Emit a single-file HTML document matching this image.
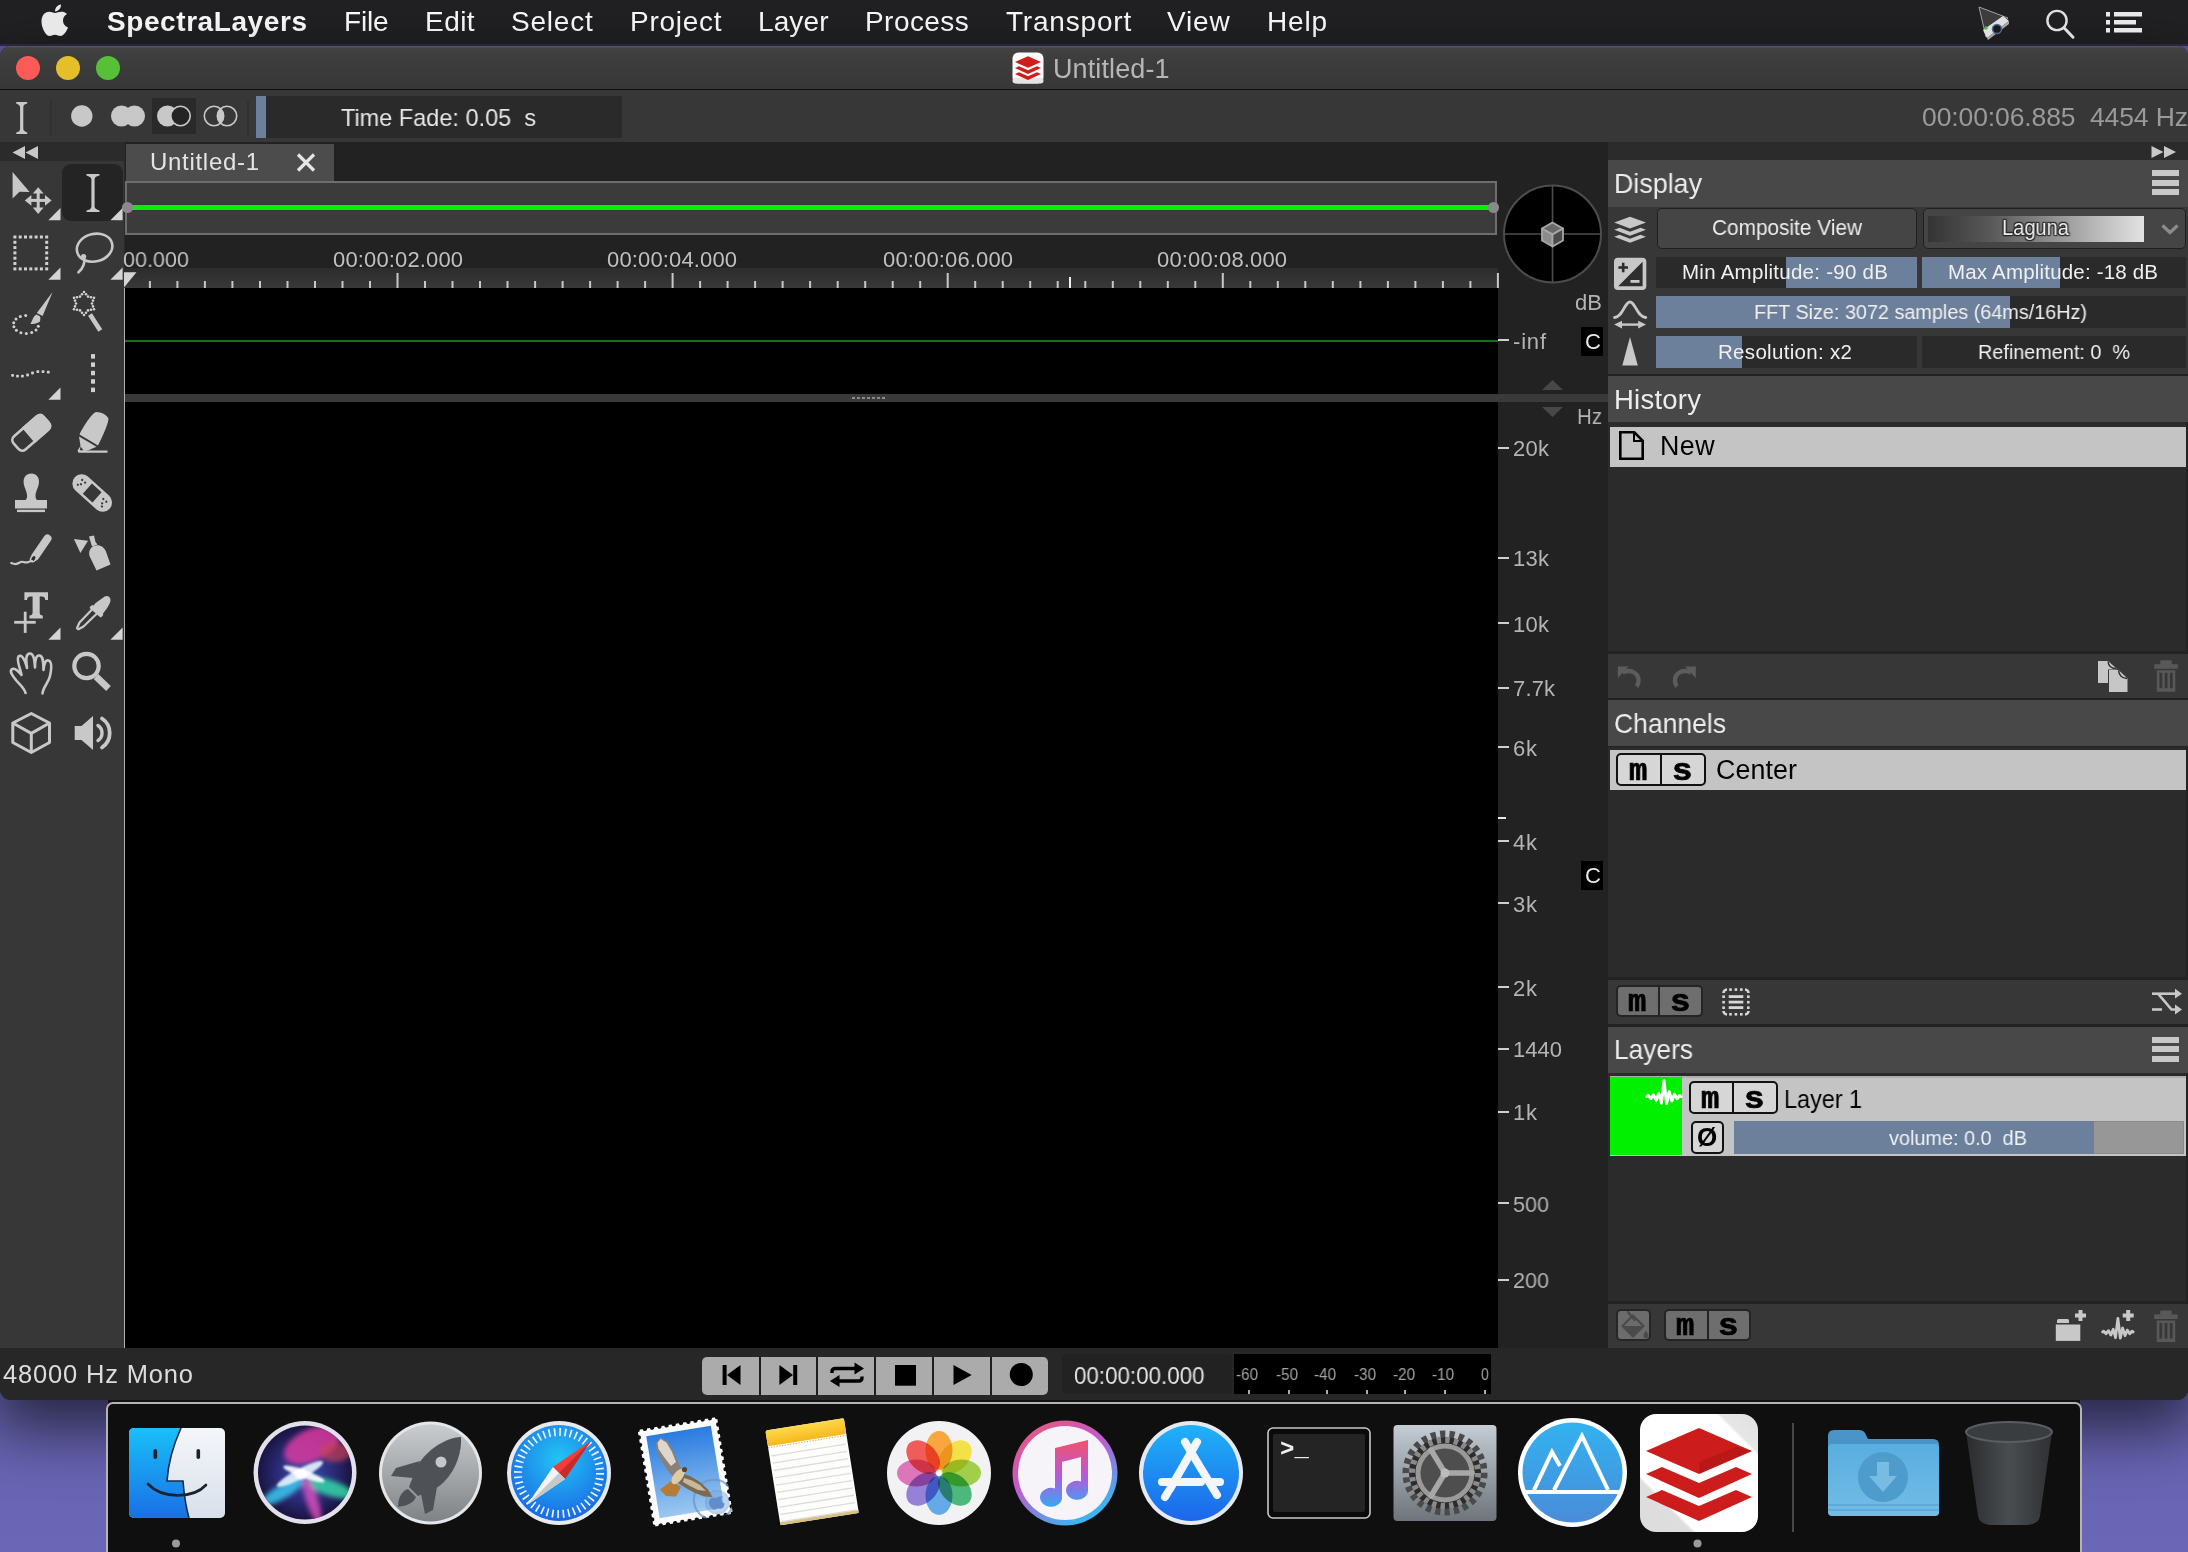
<!DOCTYPE html>
<html><head><meta charset="utf-8"><title>SpectraLayers</title>
<style>
html,body{margin:0;padding:0;}
body{width:2188px;height:1552px;overflow:hidden;position:relative;background:#5f5aa6;font-family:"Liberation Sans",sans-serif;}
.b{position:absolute;box-sizing:border-box;}
.t{position:absolute;white-space:pre;will-change:transform;}
svg{position:absolute;overflow:visible;}
</style></head><body>
<div class="b " style="left:0px;top:0px;width:2188px;height:1552px;background:linear-gradient(180deg,#5c58a2 0px,#6662ae 1400px,#6b66b6 1552px);"></div>
<div class="b " style="left:0px;top:0px;width:2188px;height:43.5px;background:#212123;"></div>
<div class="b " style="left:0px;top:43.5px;width:2188px;height:2.5px;background:#2e2b50;"></div>
<span class="t " style="left:107.0px;top:8.0px;font-size:28px;line-height:28px;color:#fff;letter-spacing:0.58px;font-weight:bold;">SpectraLayers</span>
<span class="t " style="left:344.0px;top:8.0px;font-size:28px;line-height:28px;color:#fff;letter-spacing:-0.17px;">File</span>
<span class="t " style="left:425.0px;top:8.0px;font-size:28px;line-height:28px;color:#fff;letter-spacing:0.45px;">Edit</span>
<span class="t " style="left:511.0px;top:8.0px;font-size:28px;line-height:28px;color:#fff;letter-spacing:0.80px;">Select</span>
<span class="t " style="left:629.5px;top:8.0px;font-size:28px;line-height:28px;color:#fff;letter-spacing:0.73px;">Project</span>
<span class="t " style="left:758.0px;top:8.0px;font-size:28px;line-height:28px;color:#fff;letter-spacing:0.11px;">Layer</span>
<span class="t " style="left:865.0px;top:8.0px;font-size:28px;line-height:28px;color:#fff;letter-spacing:0.44px;">Process</span>
<span class="t " style="left:1005.5px;top:8.0px;font-size:28px;line-height:28px;color:#fff;letter-spacing:0.80px;">Transport</span>
<span class="t " style="left:1167.4px;top:8.0px;font-size:28px;line-height:28px;color:#fff;letter-spacing:0.81px;">View</span>
<span class="t " style="left:1267.0px;top:8.0px;font-size:28px;line-height:28px;color:#fff;letter-spacing:0.81px;">Help</span>
<div class="b" id="win" style="left:0;top:46px;width:2188px;height:1354px;background:#272727;border-radius:10px 10px 11px 11px;overflow:hidden;box-shadow:0 24px 60px 6px rgba(0,0,0,0.6);">
<div class="b" style="left:0;top:-46px;width:2188px;height:1552px;">
<div class="b " style="left:0px;top:46px;width:2188px;height:43px;background:linear-gradient(180deg,#5a5a5a 0,#434343 2px,#3e3e3e 10px,#373737 43px);"></div>
<div class="b " style="left:0px;top:89px;width:2188px;height:1px;background:#0c0c0c;"></div>
<div class="b " style="left:16px;top:56px;width:24px;height:24px;background:#fc5b57;border-radius:50%;"></div>
<div class="b " style="left:56px;top:56px;width:24px;height:24px;background:#e5bf2a;border-radius:50%;"></div>
<div class="b " style="left:96px;top:56px;width:24px;height:24px;background:#57c038;border-radius:50%;"></div>
<span class="t " style="left:1053.0px;top:55.7px;font-size:27px;line-height:27px;color:#b6b6b6;letter-spacing:0.11px;">Untitled-1</span>
<div class="b " style="left:0px;top:90px;width:2188px;height:52px;background:#373737;"></div>
<div class="b " style="left:256px;top:96px;width:366px;height:42px;background:#2a2a2a;"></div>
<div class="b " style="left:256px;top:96px;width:10px;height:42px;background:#6d809b;"></div>
<div class="b " style="left:152px;top:98px;width:44px;height:36px;background:#2a2a2a;"></div>
<div class="b " style="left:50px;top:100px;width:2px;height:36px;background:#313131;"></div>
<div class="b " style="left:247px;top:100px;width:2px;height:36px;background:#313131;"></div>
<span class="t " style="left:341.0px;top:105.5px;font-size:24px;line-height:24px;color:#e6e6e6;transform:scaleX(0.9789);transform-origin:0 50%;">Time Fade: 0.05  s</span>
<span class="t " style="left:1922.0px;top:104.3px;font-size:26.5px;line-height:26.5px;color:#9a9a9a;letter-spacing:-0.11px;">00:00:06.885  4454 Hz</span>
<div class="b " style="left:0px;top:142px;width:2188px;height:20px;background:#2b2b2b;"></div>
<div class="b " style="left:0px;top:161px;width:124px;height:1187px;background:#373737;"></div>
<div class="b " style="left:62px;top:164px;width:61px;height:57px;background:#242424;border-radius:9px;"></div>
<div class="b " style="left:124px;top:142px;width:1484px;height:1206px;background:#222222;"></div>
<div class="b " style="left:124px;top:142px;width:1px;height:1206px;background:#2a2a2a;"></div>
<div class="b " style="left:126px;top:144px;width:208px;height:37px;background:#4c4c4c;"></div>
<span class="t " style="left:150.0px;top:150.0px;font-size:24px;line-height:24px;color:#e4e4e4;letter-spacing:0.70px;">Untitled-1</span>
<div class="b " style="left:125px;top:181px;width:1372px;height:54px;background:#3b3b3b;border:2px solid #6e6e6e;"></div>
<div class="b " style="left:131px;top:205px;width:1361px;height:5px;background:#0bea0b;"></div>
<div class="b " style="left:122px;top:202px;width:11px;height:11px;background:#8a8a8a;border-radius:50%;"></div>
<div class="b " style="left:1488px;top:202px;width:11px;height:11px;background:#8a8a8a;border-radius:50%;"></div>
<div class="b " style="left:125px;top:268px;width:1373px;height:20px;background:linear-gradient(180deg,#2c2c2c,#383838);"></div>
<span class="t " style="left:332.5px;top:249.4px;font-size:22px;line-height:22px;color:#c0c0c0;letter-spacing:0.14px;">00:00:02.000</span>
<span class="t " style="left:606.5px;top:249.4px;font-size:22px;line-height:22px;color:#c0c0c0;letter-spacing:0.14px;">00:00:04.000</span>
<span class="t " style="left:882.5px;top:249.4px;font-size:22px;line-height:22px;color:#c0c0c0;letter-spacing:0.14px;">00:00:06.000</span>
<span class="t " style="left:1156.5px;top:249.4px;font-size:22px;line-height:22px;color:#c0c0c0;letter-spacing:0.14px;">00:00:08.000</span>
<span class="t " style="left:122.5px;top:249.4px;font-size:22px;line-height:22px;color:#c0c0c0;transform:scaleX(0.9808);transform-origin:0 50%;">00.000</span>
<svg style="left:0;top:0" width="2188" height="300" fill="#c8c8c8"><rect x="148.9" y="281" width="2" height="7"/><rect x="176.4" y="281" width="2" height="7"/><rect x="203.9" y="281" width="2" height="7"/><rect x="231.4" y="281" width="2" height="7"/><rect x="259.0" y="281" width="2" height="7"/><rect x="286.5" y="281" width="2" height="7"/><rect x="314.0" y="281" width="2" height="7"/><rect x="341.5" y="281" width="2" height="7"/><rect x="369.0" y="281" width="2" height="7"/><rect x="396.5" y="273" width="2" height="15"/><rect x="424.0" y="281" width="2" height="7"/><rect x="451.5" y="281" width="2" height="7"/><rect x="479.0" y="281" width="2" height="7"/><rect x="506.5" y="281" width="2" height="7"/><rect x="534.1" y="281" width="2" height="7"/><rect x="561.6" y="281" width="2" height="7"/><rect x="589.1" y="281" width="2" height="7"/><rect x="616.6" y="281" width="2" height="7"/><rect x="644.1" y="281" width="2" height="7"/><rect x="671.6" y="273" width="2" height="15"/><rect x="699.1" y="281" width="2" height="7"/><rect x="726.6" y="281" width="2" height="7"/><rect x="754.1" y="281" width="2" height="7"/><rect x="781.6" y="281" width="2" height="7"/><rect x="809.1" y="281" width="2" height="7"/><rect x="836.7" y="281" width="2" height="7"/><rect x="864.2" y="281" width="2" height="7"/><rect x="891.7" y="281" width="2" height="7"/><rect x="919.2" y="281" width="2" height="7"/><rect x="946.7" y="273" width="2" height="15"/><rect x="974.2" y="281" width="2" height="7"/><rect x="1001.7" y="281" width="2" height="7"/><rect x="1029.2" y="281" width="2" height="7"/><rect x="1056.7" y="281" width="2" height="7"/><rect x="1084.3" y="281" width="2" height="7"/><rect x="1111.8" y="281" width="2" height="7"/><rect x="1139.3" y="281" width="2" height="7"/><rect x="1166.8" y="281" width="2" height="7"/><rect x="1194.3" y="281" width="2" height="7"/><rect x="1221.8" y="273" width="2" height="15"/><rect x="1249.3" y="281" width="2" height="7"/><rect x="1276.8" y="281" width="2" height="7"/><rect x="1304.3" y="281" width="2" height="7"/><rect x="1331.8" y="281" width="2" height="7"/><rect x="1359.4" y="281" width="2" height="7"/><rect x="1386.9" y="281" width="2" height="7"/><rect x="1414.4" y="281" width="2" height="7"/><rect x="1441.9" y="281" width="2" height="7"/><rect x="1469.4" y="281" width="2" height="7"/><rect x="1496.9" y="273" width="2" height="15"/><rect x="1069" y="277" width="2" height="11" fill="#f0f0f0"/><polygon points="124,272.300 136.500,272.300 124,287.600" fill="#d4d4d4"/></svg>
<div class="b " style="left:125px;top:288px;width:1373px;height:106px;background:#000;"></div>
<div class="b " style="left:125px;top:340px;width:1373px;height:2px;background:#14701a;"></div>
<div class="b " style="left:125px;top:394px;width:1483px;height:8px;background:#3a3a3a;"></div>
<div class="b " style="left:125px;top:402px;width:1373px;height:946px;background:#000;"></div>
<div class="b " style="left:124px;top:288px;width:1px;height:1060px;background:#b0b0b0;"></div>
<svg style="left:0;top:0" width="2188" height="410" fill="#8a8a8a"><rect x="852" y="397" width="3" height="2"/><rect x="857" y="397" width="3" height="2"/><rect x="862" y="397" width="3" height="2"/><rect x="867" y="397" width="3" height="2"/><rect x="872" y="397" width="3" height="2"/><rect x="877" y="397" width="3" height="2"/><rect x="882" y="397" width="3" height="2"/></svg>
<div class="b " style="left:1498px;top:402px;width:110px;height:946px;background:#222;"></div>
<div class="b " style="left:1498px;top:288px;width:110px;height:106px;background:#222;"></div>
<div class="b " style="left:1498px;top:339px;width:11px;height:2px;background:#cfcfcf;"></div>
<span class="t " style="left:1513.0px;top:330.7px;font-size:22px;line-height:22px;color:#b4b4b4;letter-spacing:0.81px;">-inf</span>
<div class="b " style="left:1498px;top:447px;width:11px;height:2px;background:#cfcfcf;"></div>
<span class="t " style="left:1512.5px;top:438.2px;font-size:22px;line-height:22px;color:#b4b4b4;letter-spacing:0.26px;">20k</span>
<div class="b " style="left:1498px;top:557px;width:11px;height:2px;background:#cfcfcf;"></div>
<span class="t " style="left:1512.5px;top:548.4px;font-size:22px;line-height:22px;color:#b4b4b4;letter-spacing:0.26px;">13k</span>
<div class="b " style="left:1498px;top:622px;width:11px;height:2px;background:#cfcfcf;"></div>
<span class="t " style="left:1512.5px;top:614.0px;font-size:22px;line-height:22px;color:#b4b4b4;letter-spacing:0.26px;">10k</span>
<div class="b " style="left:1498px;top:687px;width:11px;height:2px;background:#cfcfcf;"></div>
<span class="t " style="left:1512.5px;top:678.4px;font-size:22px;line-height:22px;color:#b4b4b4;letter-spacing:0.14px;">7.7k</span>
<div class="b " style="left:1498px;top:746px;width:11px;height:2px;background:#cfcfcf;"></div>
<span class="t " style="left:1512.5px;top:738.1px;font-size:22px;line-height:22px;color:#b4b4b4;letter-spacing:0.76px;">6k</span>
<div class="b " style="left:1498px;top:840px;width:11px;height:2px;background:#cfcfcf;"></div>
<span class="t " style="left:1512.5px;top:832.1px;font-size:22px;line-height:22px;color:#b4b4b4;letter-spacing:0.76px;">4k</span>
<div class="b " style="left:1498px;top:902px;width:11px;height:2px;background:#cfcfcf;"></div>
<span class="t " style="left:1512.5px;top:894.0px;font-size:22px;line-height:22px;color:#b4b4b4;letter-spacing:0.76px;">3k</span>
<div class="b " style="left:1498px;top:986px;width:11px;height:2px;background:#cfcfcf;"></div>
<span class="t " style="left:1512.5px;top:978.1px;font-size:22px;line-height:22px;color:#b4b4b4;letter-spacing:0.76px;">2k</span>
<div class="b " style="left:1498px;top:1048px;width:11px;height:2px;background:#cfcfcf;"></div>
<span class="t " style="left:1512.5px;top:1039.4px;font-size:22px;line-height:22px;color:#b4b4b4;letter-spacing:0.02px;">1440</span>
<div class="b " style="left:1498px;top:1111px;width:11px;height:2px;background:#cfcfcf;"></div>
<span class="t " style="left:1512.5px;top:1102.2px;font-size:22px;line-height:22px;color:#b4b4b4;letter-spacing:0.76px;">1k</span>
<div class="b " style="left:1498px;top:1202px;width:11px;height:2px;background:#cfcfcf;"></div>
<span class="t " style="left:1512.5px;top:1194.0px;font-size:22px;line-height:22px;color:#b4b4b4;transform:scaleX(0.9807);transform-origin:0 50%;">500</span>
<div class="b " style="left:1498px;top:1279px;width:11px;height:2px;background:#cfcfcf;"></div>
<span class="t " style="left:1512.5px;top:1270.4px;font-size:22px;line-height:22px;color:#b4b4b4;transform:scaleX(0.9807);transform-origin:0 50%;">200</span>
<div class="b " style="left:1498px;top:817px;width:8px;height:2px;background:#e8e8e8;"></div>
<span class="t " style="left:1575.0px;top:292.4px;font-size:22px;line-height:22px;color:#b4b4b4;letter-spacing:0.09px;">dB</span>
<span class="t " style="left:1577.0px;top:406.4px;font-size:22px;line-height:22px;color:#b4b4b4;transform:scaleX(0.9298);transform-origin:0 50%;">Hz</span>
<div class="b " style="left:1581px;top:327px;width:22px;height:29px;background:#000;"></div>
<span class="t " style="left:1585.0px;top:330.9px;font-size:22px;line-height:22px;color:#e8e8e8;">C</span>
<div class="b " style="left:1581px;top:861px;width:22px;height:29px;background:#000;"></div>
<span class="t " style="left:1585.0px;top:864.9px;font-size:22px;line-height:22px;color:#e8e8e8;">C</span>
<svg style="left:0;top:0" width="2188" height="430"><polygon points="1542,390 1552.5,380 1563,390" fill="#484848"/><polygon points="1542,407 1563,407 1552.5,417" fill="#484848"/></svg>
<svg style="left:1498px;top:180px" width="110" height="110" viewBox="1498 180 110 110">
<circle cx="1552.5" cy="234" r="48.5" fill="#000" stroke="#4d4d4d" stroke-width="2"/>
<path d="M1552.5 185V283M1503.5 234H1601.5" stroke="#4d4d4d" stroke-width="1.6"/>
<g stroke="#a8a8a8" stroke-width="1.8" stroke-linejoin="round">
<polygon points="1552.5,222.5 1563,228.5 1552.5,234.5 1542,228.5" fill="#6a6a6a"/>
<polygon points="1542,228.5 1552.5,234.5 1552.5,246.5 1542,240.5" fill="#8c8c8c"/>
<polygon points="1563,228.5 1552.5,234.5 1552.5,246.5 1563,240.5" fill="#4a4a4a"/>
</g></svg>
<div class="b " style="left:1608px;top:142px;width:580px;height:1206px;background:#222;"></div>
<div class="b " style="left:1608px;top:142px;width:580px;height:18px;background:#2b2b2b;"></div>
<div class="b " style="left:1608px;top:160px;width:580px;height:46.5px;background:#484848;"></div>
<span class="t " style="left:1614.0px;top:169.8px;font-size:27.5px;line-height:27.5px;color:#ececec;transform:scaleX(0.9760);transform-origin:0 50%;">Display</span>
<div class="b " style="left:2152px;top:170.0px;width:27px;height:6px;background:#c8c8c8;"></div>
<div class="b " style="left:2152px;top:179.6px;width:27px;height:6px;background:#c8c8c8;"></div>
<div class="b " style="left:2152px;top:189.2px;width:27px;height:6px;background:#c8c8c8;"></div>
<div class="b " style="left:1608px;top:206.5px;width:580px;height:167px;background:#373737;"></div>
<div class="b " style="left:1657px;top:207.5px;width:260px;height:41px;background:#454545;border:1.5px solid #1f1f1f;border-radius:5px;"></div>
<span class="t " style="left:1712.0px;top:217.8px;font-size:21.5px;line-height:21.5px;color:#ececec;transform:scaleX(0.9680);transform-origin:0 50%;">Composite View</span>
<div class="b " style="left:1923px;top:207.5px;width:263px;height:41px;background:#454545;border:1.5px solid #1f1f1f;border-radius:5px;"></div>
<div class="b " style="left:1928px;top:216px;width:216px;height:26px;background:linear-gradient(90deg,#343434 0%,#5a5a5a 30%,#8a8a8a 55%,#bdbdbd 80%,#e2e2e2 100%);"></div>
<span class="t " style="left:2002.0px;top:217.8px;font-size:21.5px;line-height:21.5px;color:#f0f0f0;text-shadow:0 0 2px #222,1px 1px 1px #222,-1px -1px 1px #222,1px -1px 1px #222,-1px 1px 1px #222;transform:scaleX(0.9338);transform-origin:0 50%;">Laguna</span>
<svg style="left:2160px;top:222px" width="20" height="14"><path d="M2.5 3.5L10 10.5L17.5 3.5" fill="none" stroke="#8c8c8c" stroke-width="3.2"/></svg>
<div class="b " style="left:1656px;top:256.5px;width:261px;height:31.5px;background:#2a2a2a;"></div>
<div class="b " style="left:1786px;top:256.5px;width:131px;height:31.5px;background:#6d809b;"></div>
<span class="t " style="left:1682.0px;top:262.2px;font-size:20.5px;line-height:20.5px;color:#f0f0f0;letter-spacing:0.27px;">Min Amplitude: -90 dB</span>
<div class="b " style="left:1922px;top:256.5px;width:264px;height:31.5px;background:#2a2a2a;"></div>
<div class="b " style="left:1922px;top:256.5px;width:138px;height:31.5px;background:#6d809b;"></div>
<span class="t " style="left:1948.0px;top:262.2px;font-size:20.5px;line-height:20.5px;color:#f0f0f0;letter-spacing:0.19px;">Max Amplitude: -18 dB</span>
<div class="b " style="left:1656px;top:296px;width:530px;height:32px;background:#2a2a2a;"></div>
<div class="b " style="left:1656px;top:296px;width:354px;height:32px;background:#6d809b;"></div>
<span class="t " style="left:1754.0px;top:301.9px;font-size:20.5px;line-height:20.5px;color:#f0f0f0;transform:scaleX(0.9657);transform-origin:0 50%;">FFT Size: 3072 samples (64ms/16Hz)</span>
<div class="b " style="left:1656px;top:336px;width:261px;height:32px;background:#2a2a2a;"></div>
<div class="b " style="left:1656px;top:336px;width:86px;height:32px;background:#6d809b;"></div>
<span class="t " style="left:1718.0px;top:341.9px;font-size:20.5px;line-height:20.5px;color:#f0f0f0;letter-spacing:0.31px;">Resolution: x2</span>
<div class="b " style="left:1922px;top:336px;width:264px;height:32px;background:#2a2a2a;"></div>
<span class="t " style="left:1978.0px;top:341.9px;font-size:20.5px;line-height:20.5px;color:#f0f0f0;transform:scaleX(0.9666);transform-origin:0 50%;">Refinement: 0  %</span>
<div class="b " style="left:1608px;top:373.5px;width:580px;height:3px;background:#222;"></div>
<div class="b " style="left:1608px;top:376px;width:580px;height:46px;background:#484848;"></div>
<span class="t " style="left:1614.0px;top:385.8px;font-size:27.5px;line-height:27.5px;color:#ececec;letter-spacing:0.24px;">History</span>
<div class="b " style="left:1608px;top:422px;width:580px;height:229px;background:#2b2b2b;"></div>
<div class="b " style="left:1610px;top:426.5px;width:576px;height:40px;background:#c4c4c4;"></div>
<span class="t " style="left:1660.0px;top:433.2px;font-size:26.8px;line-height:26.8px;color:#000;letter-spacing:0.44px;">New</span>
<div class="b " style="left:1608px;top:651px;width:580px;height:2.5px;background:#222;"></div>
<div class="b " style="left:1608px;top:653.5px;width:580px;height:44px;background:#373737;"></div>
<div class="b " style="left:1608px;top:697.5px;width:580px;height:2.5px;background:#222;"></div>
<div class="b " style="left:1608px;top:700px;width:580px;height:46px;background:#484848;"></div>
<span class="t " style="left:1614.0px;top:709.8px;font-size:27.5px;line-height:27.5px;color:#ececec;transform:scaleX(0.9640);transform-origin:0 50%;">Channels</span>
<div class="b " style="left:1608px;top:746.5px;width:580px;height:230.5px;background:#2b2b2b;"></div>
<div class="b " style="left:1610px;top:750px;width:576px;height:40px;background:#c4c4c4;"></div>
<span class="t " style="left:1716.0px;top:757.0px;font-size:26.8px;line-height:26.8px;color:#000;letter-spacing:0.11px;">Center</span>
<div class="b " style="left:1608px;top:977px;width:580px;height:3px;background:#222;"></div>
<div class="b " style="left:1608px;top:980px;width:580px;height:44px;background:#373737;"></div>
<div class="b " style="left:1608px;top:1024px;width:580px;height:2.5px;background:#222;"></div>
<div class="b " style="left:1608px;top:1026.5px;width:580px;height:46px;background:#484848;"></div>
<span class="t " style="left:1614.0px;top:1036.3px;font-size:27.5px;line-height:27.5px;color:#ececec;transform:scaleX(0.9571);transform-origin:0 50%;">Layers</span>
<div class="b " style="left:2152px;top:1036.5px;width:27px;height:6px;background:#c8c8c8;"></div>
<div class="b " style="left:2152px;top:1046.1px;width:27px;height:6px;background:#c8c8c8;"></div>
<div class="b " style="left:2152px;top:1055.7px;width:27px;height:6px;background:#c8c8c8;"></div>
<div class="b " style="left:1608px;top:1072.5px;width:580px;height:228px;background:#2b2b2b;"></div>
<div class="b " style="left:1610px;top:1076px;width:576px;height:80px;background:#c4c4c4;border-top:2px solid #b0b0b0;"></div>
<div class="b " style="left:1610px;top:1077px;width:72px;height:78px;background:#00f000;"></div>
<span class="t " style="left:1784.0px;top:1085.8px;font-size:26px;line-height:26px;color:#000;transform:scaleX(0.8995);transform-origin:0 50%;">Layer 1</span>
<div class="b " style="left:1734px;top:1120.5px;width:450px;height:33px;background:#979797;border:1px solid #8a8a8a;"></div>
<div class="b " style="left:1734px;top:1120.5px;width:360px;height:33px;background:#6d809b;"></div>
<span class="t " style="left:1889.0px;top:1128.1px;font-size:20.5px;line-height:20.5px;color:#eef2f8;transform:scaleX(0.9688);transform-origin:0 50%;">volume: 0.0  dB</span>
<div class="b " style="left:1608px;top:1300.5px;width:580px;height:3.5px;background:#222;"></div>
<div class="b " style="left:1608px;top:1304px;width:580px;height:44px;background:#373737;"></div>
<div class="b " style="left:2186px;top:422px;width:2px;height:229px;background:#222;"></div>
<div class="b " style="left:2186px;top:746.5px;width:2px;height:230.5px;background:#222;"></div>
<div class="b " style="left:2186px;top:1072.5px;width:2px;height:228px;background:#222;"></div>
<div class="b " style="left:1616px;top:752.5px;width:90px;height:33px;background:#d6d6d6;border:2px solid #111;border-radius:5px;"></div>
<div class="b " style="left:1660.0px;top:752.5px;width:2px;height:33px;background:#111;"></div>
<span class="t " style="left:1629.0px;top:756.5px;font-size:30.5px;line-height:30.5px;color:#000;font-weight:bold;font-family:'Liberation Mono',monospace;-webkit-text-stroke:0.7px #000;">m</span>
<span class="t " style="left:1673.1px;top:756.5px;font-size:30.5px;line-height:30.5px;color:#000;font-weight:bold;font-family:'Liberation Mono',monospace;transform:scaleX(1.12);-webkit-text-stroke:0.7px #000;">s</span>
<div class="b " style="left:1615.5px;top:985px;width:87.5px;height:31.5px;background:#6e6e6e;border:2px solid #242424;border-radius:5px;"></div>
<div class="b " style="left:1658.25px;top:985px;width:2px;height:31.5px;background:#242424;"></div>
<span class="t " style="left:1627.9px;top:988.2px;font-size:30.5px;line-height:30.5px;color:#000;font-weight:bold;font-family:'Liberation Mono',monospace;-webkit-text-stroke:0.7px #000;">m</span>
<span class="t " style="left:1670.7px;top:988.2px;font-size:30.5px;line-height:30.5px;color:#000;font-weight:bold;font-family:'Liberation Mono',monospace;transform:scaleX(1.12);-webkit-text-stroke:0.7px #000;">s</span>
<div class="b " style="left:1688.5px;top:1080.5px;width:89px;height:33px;background:#d6d6d6;border:2px solid #111;border-radius:5px;"></div>
<div class="b " style="left:1732.0px;top:1080.5px;width:2px;height:33px;background:#111;"></div>
<span class="t " style="left:1701.2px;top:1084.5px;font-size:30.5px;line-height:30.5px;color:#000;font-weight:bold;font-family:'Liberation Mono',monospace;-webkit-text-stroke:0.7px #000;">m</span>
<span class="t " style="left:1744.8px;top:1084.5px;font-size:30.5px;line-height:30.5px;color:#000;font-weight:bold;font-family:'Liberation Mono',monospace;transform:scaleX(1.12);-webkit-text-stroke:0.7px #000;">s</span>
<div class="b " style="left:1664px;top:1309px;width:87px;height:31.5px;background:#6e6e6e;border:2px solid #242424;border-radius:5px;"></div>
<div class="b " style="left:1706.5px;top:1309px;width:2px;height:31.5px;background:#242424;"></div>
<span class="t " style="left:1676.2px;top:1312.2px;font-size:30.5px;line-height:30.5px;color:#000;font-weight:bold;font-family:'Liberation Mono',monospace;-webkit-text-stroke:0.7px #000;">m</span>
<span class="t " style="left:1718.8px;top:1312.2px;font-size:30.5px;line-height:30.5px;color:#000;font-weight:bold;font-family:'Liberation Mono',monospace;transform:scaleX(1.12);-webkit-text-stroke:0.7px #000;">s</span>
<div class="b " style="left:1690.5px;top:1121px;width:33px;height:32.5px;background:#d6d6d6;border:2px solid #111;border-radius:5px;"></div>
<div class="b " style="left:1615.5px;top:1309px;width:35.5px;height:31.5px;background:#6c6c6c;border:2px solid #262626;border-radius:5px;"></div>
<div class="b " style="left:0px;top:1348px;width:2188px;height:52px;background:#272727;"></div>
<span class="t " style="left:3.0px;top:1362.4px;font-size:25.5px;line-height:25.5px;color:#dcdcdc;letter-spacing:0.83px;">48000 Hz Mono</span>
<div class="b " style="left:1062px;top:1354px;width:170px;height:40px;background:#222;border-radius:4px;"></div>
<span class="t " style="left:1073.5px;top:1364.5px;font-size:23px;line-height:23px;color:#e4e4e4;transform:scaleX(0.9717);transform-origin:0 50%;">00:00:00.000</span>
<div class="b " style="left:1233.5px;top:1354px;width:257px;height:40px;background:#000;"></div>
<span class="t " style="left:1236.4px;top:1366.5px;font-size:16px;line-height:16px;color:#a4a4a4;transform:scaleX(0.9568);transform-origin:0 50%;">-60</span>
<div class="b " style="left:1248px;top:1390px;width:2px;height:4px;background:#b0b0b0;"></div>
<span class="t " style="left:1276.1px;top:1366.5px;font-size:16px;line-height:16px;color:#a4a4a4;transform:scaleX(0.9568);transform-origin:0 50%;">-50</span>
<div class="b " style="left:1288px;top:1390px;width:2px;height:4px;background:#b0b0b0;"></div>
<span class="t " style="left:1314.4px;top:1366.5px;font-size:16px;line-height:16px;color:#a4a4a4;transform:scaleX(0.9568);transform-origin:0 50%;">-40</span>
<div class="b " style="left:1326px;top:1390px;width:2px;height:4px;background:#b0b0b0;"></div>
<span class="t " style="left:1354.4px;top:1366.5px;font-size:16px;line-height:16px;color:#a4a4a4;transform:scaleX(0.9568);transform-origin:0 50%;">-30</span>
<div class="b " style="left:1366px;top:1390px;width:2px;height:4px;background:#b0b0b0;"></div>
<span class="t " style="left:1392.7px;top:1366.5px;font-size:16px;line-height:16px;color:#a4a4a4;transform:scaleX(0.9568);transform-origin:0 50%;">-20</span>
<div class="b " style="left:1404px;top:1390px;width:2px;height:4px;background:#b0b0b0;"></div>
<span class="t " style="left:1432.1px;top:1366.5px;font-size:16px;line-height:16px;color:#a4a4a4;transform:scaleX(0.9568);transform-origin:0 50%;">-10</span>
<div class="b " style="left:1444px;top:1390px;width:2px;height:4px;background:#b0b0b0;"></div>
<span class="t " style="left:1480.8px;top:1366.5px;font-size:16px;line-height:16px;color:#a4a4a4;transform:scaleX(0.8876);transform-origin:0 50%;">0</span>
<div class="b " style="left:1484px;top:1390px;width:2px;height:4px;background:#b0b0b0;"></div>
<div class="b " style="left:702px;top:1356.5px;width:346px;height:38px;background:#ababab;border-radius:5px;"></div>
<div class="b " style="left:758.7px;top:1356.5px;width:2px;height:38px;background:#1e1e1e;"></div>
<div class="b " style="left:816.4px;top:1356.5px;width:2px;height:38px;background:#1e1e1e;"></div>
<div class="b " style="left:874.1px;top:1356.5px;width:2px;height:38px;background:#1e1e1e;"></div>
<div class="b " style="left:931.8px;top:1356.5px;width:2px;height:38px;background:#1e1e1e;"></div>
<div class="b " style="left:989.5px;top:1356.5px;width:2px;height:38px;background:#1e1e1e;"></div>
<svg style="left:1012px;top:52px" width="32" height="32" viewBox="0 0 32 32" ><rect x=".5" y=".5" width="31" height="31" rx="6" fill="#fafafa"/><rect x=".5" y="26" width="31" height="5.500" rx="3" fill="#e4e4e4"/><g fill="#d01c1c"><path d="M3 10L16 4.200L29 10L16 15.800Z"/><path d="M3 16L7 14.200L16 18.300L25 14.200L29 16L16 22Z"/><path d="M3 22L7 20.200L16 24.300L25 20.200L29 22L16 28Z"/></g></svg>
<svg style="left:0;top:90px" width="260" height="52" viewBox="0 90 260 52"><path d="M16.2 102h11v1.500c-2.500 .300 -3.90 1.500 -3.90 4v21.00c0 2.500 2.90 3.700 3.90 4v1.500h-11v-1.500c2.500 -.300 3.90 -1.500 3.90 -4v-21.00c0 -2.500 -2.90 -3.700 -3.90 -4z" fill="#c8c8c8"/><circle cx="81.800" cy="116" r="10.700" fill="#c8c8c8"/><circle cx="121.500" cy="116" r="10.500" fill="#c8c8c8"/><circle cx="134.500" cy="116" r="10.500" fill="#c8c8c8"/><circle cx="167.500" cy="116" r="10.500" fill="#c8c8c8"/><circle cx="180.500" cy="116" r="9.700" fill="#242424" stroke="#c8c8c8" stroke-width="1.600"/><clipPath id="cpI"><circle cx="214" cy="116" r="10"/></clipPath><circle cx="227" cy="116" r="10" fill="#c8c8c8" clip-path="url(#cpI)"/><circle cx="214" cy="116" r="9.700" fill="none" stroke="#c8c8c8" stroke-width="1.600"/><circle cx="227" cy="116" r="9.700" fill="none" stroke="#c8c8c8" stroke-width="1.600"/></svg>
<svg style="left:0px;top:142px" width="130" height="20" viewBox="0 0 130 20" ><g fill="#c8c8c8"><polygon points="12.500,10.500 25,4 25,17"/><polygon points="25.500,10.500 38,4 38,17"/></g></svg>
<svg style="left:2140px;top:142px" width="48" height="20" viewBox="0 0 48 20" ><g fill="#c8c8c8"><polygon points="11.500,4 23.500,10 11.500,16"/><polygon points="24,4 36,10 24,16"/></g></svg>
<svg style="left:294px;top:150px" width="24" height="24" viewBox="0 0 24 24" ><path d="M4 4.500L20 20.500M20 4.500L4 20.500" stroke="#e6e6e6" stroke-width="3.200"/></svg>
<svg style="left:0;top:160px" width="126" height="640" viewBox="0 160 126 640"><polygon points="48.3,220.2 60.5,220.2 60.5,208" fill="#d4d4d4"/><polygon points="110.4,220.2 122.60000000000001,220.2 122.60000000000001,208" fill="#d4d4d4"/><polygon points="48.3,279.8 60.5,279.8 60.5,267.6" fill="#d4d4d4"/><polygon points="110.4,279.8 122.60000000000001,279.8 122.60000000000001,267.6" fill="#d4d4d4"/><polygon points="48.3,399.8 60.5,399.8 60.5,387.6" fill="#d4d4d4"/><polygon points="48.3,639.7 60.5,639.7 60.5,627.5" fill="#d4d4d4"/><polygon points="110.4,639.7 122.60000000000001,639.7 122.60000000000001,627.5" fill="#d4d4d4"/><polygon points="12.600,172 29.600,192 19.500,191.700 12.600,198.600" fill="#c8c8c8"/><g fill="#c8c8c8"><rect x="36.700" y="192" width="3" height="17"/><rect x="29.500" y="198.900" width="17.500" height="3"/><polygon points="38.200,187.200 43.600,193.600 32.800,193.600"/><polygon points="38.200,214 43.600,207.400 32.800,207.400"/><polygon points="24.800,200.400 31.400,195 31.400,205.800"/><polygon points="51.600,200.400 45,195 45,205.800"/></g><path d="M86.5 174h13v1.500c-2.500 .300 -4.90 1.500 -4.90 4v27.00c0 2.500 3.90 3.700 4.90 4v1.500h-13v-1.500c2.500 -.300 4.90 -1.500 4.90 -4v-27.00c0 -2.500 -3.90 -3.700 -4.90 -4z" fill="#c8c8c8"/><g fill="#d0d0d0"><rect x="13.4" y="235.500" width="3" height="3"/><rect x="13.4" y="267.400" width="3" height="3"/><rect x="18.7" y="235.500" width="3" height="3"/><rect x="18.7" y="267.400" width="3" height="3"/><rect x="13.400" y="240.8" width="3" height="3"/><rect x="45.200" y="240.8" width="3" height="3"/><rect x="24.0" y="235.500" width="3" height="3"/><rect x="24.0" y="267.400" width="3" height="3"/><rect x="13.400" y="246.1" width="3" height="3"/><rect x="45.200" y="246.1" width="3" height="3"/><rect x="29.3" y="235.500" width="3" height="3"/><rect x="29.3" y="267.400" width="3" height="3"/><rect x="13.400" y="251.4" width="3" height="3"/><rect x="45.200" y="251.4" width="3" height="3"/><rect x="34.6" y="235.500" width="3" height="3"/><rect x="34.6" y="267.400" width="3" height="3"/><rect x="13.400" y="256.7" width="3" height="3"/><rect x="45.200" y="256.7" width="3" height="3"/><rect x="39.9" y="235.500" width="3" height="3"/><rect x="39.9" y="267.400" width="3" height="3"/><rect x="13.400" y="262.0" width="3" height="3"/><rect x="45.200" y="262.0" width="3" height="3"/><rect x="45.2" y="235.500" width="3" height="3"/><rect x="45.2" y="267.400" width="3" height="3"/></g><g fill="none" stroke="#c8c8c8" stroke-width="2.600" stroke-linecap="round"><ellipse cx="94.600" cy="247.700" rx="18" ry="13.800" transform="rotate(-14 94.600 247.700)"/><path d="M83.500 256.500C86 262 82.500 269 78.500 272.300"/></g><circle cx="83.600" cy="256.600" r="2.600" fill="#c8c8c8"/><g fill="#d0d0d0"><circle cx="38.3" cy="326.3" r="1.500"/><circle cx="36.0" cy="329.9" r="1.500"/><circle cx="31.7" cy="332.5" r="1.500"/><circle cx="26.3" cy="333.5" r="1.500"/><circle cx="20.9" cy="332.7" r="1.500"/><circle cx="16.4" cy="330.3" r="1.500"/><circle cx="13.9" cy="326.7" r="1.500"/><circle cx="13.7" cy="322.7" r="1.500"/><circle cx="16.0" cy="319.1" r="1.500"/><circle cx="20.3" cy="316.5" r="1.500"/><circle cx="25.7" cy="315.5" r="1.500"/></g><g fill="#c8c8c8"><path d="M52.600 292L42.600 316L36.800 313Z"/><path d="M36.500 314.500C33.500 316 32.500 320 30.500 324C34 324 37.500 323.500 40 321.500C40.500 319 40.500 317 39.800 316.200Z"/></g><g fill="#d0d0d0"><circle cx="84.0" cy="292.0" r="1.300"/><circle cx="86.0" cy="294.3" r="1.300"/><circle cx="88.0" cy="296.6" r="1.300"/><circle cx="91.0" cy="297.2" r="1.300"/><circle cx="94.0" cy="297.8" r="1.300"/><circle cx="93.0" cy="300.6" r="1.300"/><circle cx="92.0" cy="303.5" r="1.300"/><circle cx="93.0" cy="306.4" r="1.300"/><circle cx="94.0" cy="309.2" r="1.300"/><circle cx="91.0" cy="309.8" r="1.300"/><circle cx="88.0" cy="310.4" r="1.300"/><circle cx="86.0" cy="312.7" r="1.300"/><circle cx="84.0" cy="315.0" r="1.300"/><circle cx="82.0" cy="312.7" r="1.300"/><circle cx="80.0" cy="310.4" r="1.300"/><circle cx="77.0" cy="309.8" r="1.300"/><circle cx="74.0" cy="309.2" r="1.300"/><circle cx="75.0" cy="306.4" r="1.300"/><circle cx="76.0" cy="303.5" r="1.300"/><circle cx="75.0" cy="300.6" r="1.300"/><circle cx="74.0" cy="297.8" r="1.300"/><circle cx="77.0" cy="297.2" r="1.300"/><circle cx="80.0" cy="296.6" r="1.300"/><circle cx="82.0" cy="294.3" r="1.300"/></g><path d="M90 314.500L100.300 330.500" stroke="#c8c8c8" stroke-width="4.600"/><g fill="#d0d0d0"><rect x="11.2" y="374.0" width="2.800" height="2.800" rx=".8"/><rect x="16.1" y="374.8" width="2.800" height="2.800" rx=".8"/><rect x="21.0" y="374.8" width="2.800" height="2.800" rx=".8"/><rect x="26.2" y="373.6" width="2.800" height="2.800" rx=".8"/><rect x="31.1" y="371.6" width="2.800" height="2.800" rx=".8"/><rect x="36.4" y="370.3" width="2.800" height="2.800" rx=".8"/><rect x="41.6" y="370.3" width="2.800" height="2.800" rx=".8"/><rect x="46.9" y="370.7" width="2.800" height="2.800" rx=".8"/></g><g fill="#d0d0d0"><rect x="91" y="354.1" width="4" height="4.500"/><rect x="91" y="362.4" width="4" height="4.500"/><rect x="91" y="370.8" width="4" height="4.500"/><rect x="91" y="379.2" width="4" height="4.500"/><rect x="91" y="387.6" width="4" height="4.500"/></g><g transform="rotate(-41 31.100 433)"><rect x="11.100" y="424.300" width="40" height="17.400" rx="5" fill="#373737" stroke="#c8c8c8" stroke-width="2.600"/><path d="M27.500 423H46.500Q52.400 423 52.400 429V437Q52.400 443 46.500 443H27.500Z" fill="#c8c8c8"/></g><g fill="#c8c8c8"><path d="M95.500 412.200C99 411.500 107 414.500 108.300 418.500C109.500 422 100 442 98 445.500L79.500 434.500C82 429 91 414 95.500 412.200Z"/><path d="M79 436.500L96.500 446.800L88 450.500L82.500 451L80.500 446Z"/><path d="M80.500 446L77.500 450.500L78.500 452.800H107.500V450.600H86Z"/></g><path d="M80.500 446.500L83.500 450.300L79.800 450.300Z" fill="#373737"/><g fill="#c8c8c8"><path d="M31.300 473.500C36.500 473.500 39 477.500 39 481.500C39 487 35.500 491 35.500 496C35.500 498.500 36.500 500.200 38 500.200H24.600C26.100 500.200 27.100 498.500 27.100 496C27.100 491 23.600 487 23.600 481.500C23.600 477.500 26.100 473.500 31.300 473.500Z"/><rect x="15" y="500" width="32" height="8.500"/><rect x="17" y="509.700" width="28" height="2.400"/></g><g transform="rotate(42 92.200 493)"><rect x="68.700" y="483.700" width="47" height="18.600" rx="9.300" fill="#c8c8c8"/><rect x="85.700" y="486.200" width="13" height="13.600" fill="#373737"/><g fill="#373737"><circle cx="76" cy="490" r="1.100"/><circle cx="80" cy="490" r="1.100"/><circle cx="78" cy="494" r="1.100"/><circle cx="76" cy="496.500" r="1.100"/><circle cx="104.500" cy="490" r="1.100"/><circle cx="108.500" cy="490" r="1.100"/><circle cx="106.500" cy="494" r="1.100"/><circle cx="108.500" cy="496.500" r="1.100"/></g></g><g><path d="M47.500 538.500L35.200 556.500" stroke="#c8c8c8" stroke-width="8" stroke-linecap="round"/><ellipse cx="33.400" cy="558.500" rx="3.400" ry="2.400" transform="rotate(-55 33.400 558.500)" fill="#2c2c2c" stroke="#c8c8c8" stroke-width="1.500"/><path d="M32 561C28 561.500 27 563.500 23.500 562C20 560.500 19 564.500 15 564C13 563.700 12 563.200 11.200 563" fill="none" stroke="#c8c8c8" stroke-width="2.200" stroke-linecap="round"/></g><g fill="#c8c8c8"><polygon points="73.900,539 88,540.800 80.400,553"/><path d="M89 536.500L94 535.500L95.500 542L97.500 544.500L92 546.500L90.800 542.500Z"/><path d="M91.500 547.500C96 543.500 104 545 106.500 553L110.500 564.500L96.500 570.500L89.500 556C88.500 552.500 89.500 549.500 91.500 547.500Z"/></g><g fill="#c8c8c8"><path d="M24.400 592.200H48V600H45.300C45 597.500 44 596.600 41.800 596.600H39.700V612.500C39.700 614.600 40.600 615.200 42.800 615.400V618.600H29.400V615.400C31.600 615.200 32.600 614.600 32.600 612.500V596.600H30.500C28.300 596.600 27.300 597.500 27 600H24.400Z"/><rect x="14.200" y="620.900" width="21.500" height="2.800"/><rect x="23.800" y="611.700" width="2.800" height="21.200"/></g><g><path d="M104 597C106.500 594.800 110 596 110.500 599.500C111 603 106 610 103 613.500C103.500 614.500 103 615.800 102 616.500L100.500 617.500L89.500 608L90.500 606.300C91.300 605.300 92.500 605 93.500 605.500C96 602 100.500 599.500 104 597Z" fill="#c8c8c8"/><path d="M92 609.500L79.500 622.500L77 628.300L78.500 629.200L83.500 626.500L97 613.500" fill="none" stroke="#c8c8c8" stroke-width="2.200" stroke-linejoin="round"/></g><path d="M25.500 693C24.500 688 19 684 15.500 679.500C12.500 675.500 9.500 672 11.500 669.500C14 667 18.500 671 21.500 675C20.500 669 16 660 18.500 656.500C21 654 24.500 658 27 668C26 660 25.500 654 29.500 653.500C33.500 653 34.500 659 35 667.500C35 660 36 655 39.500 655.500C43 656 43.500 661 43.500 670C44 664 45.500 659.500 48.500 660.500C52 661.500 51.500 669 50 676C48.500 683 43 687 42.500 693.500" fill="none" stroke="#c8c8c8" stroke-width="2.600" stroke-linejoin="round" stroke-linecap="round"/><g stroke="#c8c8c8" fill="none"><circle cx="86.500" cy="666" r="12.200" stroke-width="4.200"/><path d="M96 676.500L108.500 688.500" stroke-width="6.600"/></g><path d="M31.300 713.500L49.500 723V742.500L31.300 752.500L12.800 742.500V723ZM12.800 723L31.300 733.400L49.500 723M31.300 733.400V752.500" fill="none" stroke="#c8c8c8" stroke-width="3" stroke-linejoin="round"/><g><path d="M74.700 726H81.500L93 716V750L81.500 740H74.700Z" fill="#c8c8c8"/><path d="M98 725.500A9 9 0 0 1 98 740.500" fill="none" stroke="#c8c8c8" stroke-width="3.400" stroke-linecap="round"/><path d="M102 718.500A17.500 17.500 0 0 1 102 747.500" fill="none" stroke="#c8c8c8" stroke-width="3.800" stroke-linecap="round"/></g></svg>
<svg style="left:1608px;top:200px" width="580" height="1150" viewBox="1608 200 580 1150"><g fill="#c8c8c8"><path d="M1614.200 222.600L1630 216.800L1646 222.600L1630 228.600Z"/><path d="M1614.200 229.800L1619.500 227.800L1630 231.800L1640.600 227.800L1646 229.800L1630 235.800Z"/><path d="M1614.200 236.800L1619.500 234.800L1630 238.800L1640.600 234.800L1646 236.800L1630 242.800Z"/></g><rect x="1614" y="257.800" width="32.300" height="32.200" rx="4" fill="#c8c8c8"/><polygon points="1642.600,261.800 1642.600,286.200 1618.200,286.200" fill="#2e2e2e"/><g fill="#2e2e2e"><rect x="1618.400" y="266.200" width="9.600" height="2.600"/><rect x="1621.900" y="262.700" width="2.600" height="9.600"/></g><rect x="1630.500" y="280" width="9" height="2.800" fill="#c8c8c8"/><path d="M1614.500 317.500C1623 317 1624.500 302 1630 302C1635.500 302 1637 317 1645.800 317.500" fill="none" stroke="#c8c8c8" stroke-width="2.800" stroke-linecap="round"/><g fill="#c8c8c8"><rect x="1620" y="323.400" width="20" height="2.400"/><polygon points="1614.200,324.600 1622,320.800 1622,328.400"/><polygon points="1646,324.600 1638.200,320.800 1638.200,328.400"/></g><polygon points="1630,337 1637.800,365.500 1622.300,365.500" fill="#c8c8c8"/><path d="M1620.300 432.300H1634.300L1642.700 440.800V458.700H1620.300Z" fill="none" stroke="#000" stroke-width="2.600" stroke-linejoin="miter"/><path d="M1634 432.500V441H1642.500" fill="none" stroke="#000" stroke-width="2"/><g fill="none" stroke="#5c5c5c" stroke-width="4.400"><path d="M1622.500 672.500C1630 669 1639 672 1638.500 681.500C1638.300 683.500 1637.500 685.500 1636.500 686.500"/><path d="M1691 672.500C1683.500 669 1674.500 672 1675 681.500C1675.200 683.500 1676 685.500 1677 686.500"/></g><g fill="#5c5c5c"><polygon points="1617.800,666.500 1628.500,666.500 1617.800,678"/><polygon points="1695.800,666.500 1685,666.500 1695.800,678"/></g><g fill="#c6c6c6"><path d="M2098 661H2108L2116.500 668.500V669.500H2108V683H2098Z"/><path d="M2109 670H2118.500L2127.500 678.500V692H2109Z"/></g><path d="M2108 661.500C2108.500 666 2111 668.500 2116 668.500M2118.500 670.500C2119 675 2121.500 678 2127 678.500" fill="none" stroke="#2a2a2a" stroke-width="1.400"/><g fill="#585858"><rect x="2160.3" y="660.2" width="11.500" height="5" rx="1"/><rect x="2154.3" y="664.2" width="23.500" height="4.600"/><path d="M2156.8 670.2H2175.3V691.8000000000001H2156.8ZM2159.5 672.8000000000001V688.2H2162.3V672.8000000000001ZM2164.7000000000003 672.8000000000001V688.2H2167.5V672.8000000000001ZM2169.9 672.8000000000001V688.2H2172.7000000000003V672.8000000000001Z" fill-rule="evenodd"/></g><g fill="#585858"><rect x="2160.2" y="1310.4" width="11.500" height="5" rx="1"/><rect x="2154.2" y="1314.4" width="23.500" height="4.600"/><path d="M2156.7 1320.4H2175.2V1342.0H2156.7ZM2159.3999999999996 1323.0V1338.4H2162.2V1323.0ZM2164.6 1323.0V1338.4H2167.3999999999996V1323.0ZM2169.7999999999997 1323.0V1338.4H2172.6V1323.0Z" fill-rule="evenodd"/></g><g fill="#d8d8d8"><rect x="1728.700" y="995.2" width="14.600" height="2.800"/><rect x="1722.300" y="995.4" width="2.600" height="2.600"/><rect x="1747" y="995.4" width="2.600" height="2.600"/><rect x="1729.2" y="988.300" width="2.600" height="2.600"/><rect x="1729.2" y="1013" width="2.600" height="2.600"/><rect x="1728.700" y="1000.7" width="14.600" height="2.800"/><rect x="1722.300" y="1000.9" width="2.600" height="2.600"/><rect x="1747" y="1000.9" width="2.600" height="2.600"/><rect x="1734.6" y="988.300" width="2.600" height="2.600"/><rect x="1734.6" y="1013" width="2.600" height="2.600"/><rect x="1728.700" y="1006.2" width="14.600" height="2.800"/><rect x="1722.300" y="1006.4" width="2.600" height="2.600"/><rect x="1747" y="1006.4" width="2.600" height="2.600"/><rect x="1740.0" y="988.300" width="2.600" height="2.600"/><rect x="1740.0" y="1013" width="2.600" height="2.600"/></g><g fill="none" stroke="#d8d8d8" stroke-width="2.600"><path d="M1723.500 993A3.600 3.600 0 0 1 1727 989.500"/><path d="M1745 989.500A3.600 3.600 0 0 1 1748.500 993"/><path d="M1748.500 1011A3.600 3.600 0 0 1 1745 1014.500"/><path d="M1727 1014.500A3.600 3.600 0 0 1 1723.500 1011"/></g><g fill="none" stroke="#c8c8c8" stroke-width="2.600"><path d="M2152 993.700H2176"/><path d="M2152 1009.500H2162"/><path d="M2158 993.700L2171.500 1009.500H2177"/></g><g fill="#c8c8c8"><polygon points="2182,993.700 2175,988.800 2175,998.600"/><polygon points="2182,1009.500 2175,1004.600 2175,1014.400"/></g><path d="M1647.0 1096.5L1648.3 1095.5L1650.9 1098.5L1653.5 1094.9L1656.2 1100.2L1658.8 1093.3L1661.4 1103.2L1664.0 1080.5L1666.6 1103.7L1669.2 1091.7L1671.8 1100.9L1674.5 1094.3L1677.1 1098.7L1679.7 1095.5L1681.0 1096.5" fill="none" stroke="#fff" stroke-width="3" stroke-linejoin="round" stroke-linecap="round"/><g><path d="M1622.500 1326L1633 1315.500L1643.500 1326L1633 1336.500Z" fill="none" stroke="#4a4a4a" stroke-width="2.200" stroke-linejoin="round"/><path d="M1622.500 1326H1643.500L1633 1336.500Z" fill="#4a4a4a"/><path d="M1628 1312L1634.500 1320" stroke="#4a4a4a" stroke-width="2.200" stroke-linecap="round"/><path d="M1646 1330.500C1647.500 1333 1648.500 1334.500 1648.500 1335.800A2.500 2.500 0 0 1 1643.500 1335.800C1643.500 1334.500 1644.500 1333 1646 1330.500Z" fill="#4a4a4a"/></g><g fill="#c8c8c8"><rect x="2055.800" y="1324.500" width="24.500" height="16.400"/><path d="M2057 1323V1320.500Q2057 1319 2058.500 1319H2067.500Q2069 1319 2069 1320.500V1323Z"/><rect x="2075" y="1313.500" width="11" height="4"/><rect x="2078.500" y="1310" width="4" height="11"/></g><path d="M2102.6 1332.0L2103.8 1331.2L2106.1 1333.7L2108.5 1330.7L2110.8 1335.1L2113.2 1329.3L2115.5 1337.7L2117.9 1318.5L2120.3 1338.1L2122.6 1328.0L2125.0 1335.7L2127.3 1330.1L2129.7 1333.8L2132.0 1331.2L2133.2 1332.0" fill="none" stroke="#c8c8c8" stroke-width="2.8" stroke-linejoin="round" stroke-linecap="round"/><g fill="#c8c8c8"><rect x="2122.700" y="1313.500" width="11" height="4"/><rect x="2126.200" y="1310" width="4" height="11"/></g></svg>
<span class="t " style="left:1697.3px;top:1124.0px;font-size:26px;line-height:26px;color:#000;font-weight:bold;">Ø</span>
<svg style="left:700px;top:1350px" width="350" height="50" viewBox="700 1350 350 50" fill="#000"><rect x="722.600" y="1365" width="4" height="20"/><polygon points="727,1375 740.500,1365 740.500,1385"/><rect x="793.200" y="1365" width="4" height="20"/><polygon points="793,1375 779.400,1365 779.400,1385"/><g fill="none" stroke="#000" stroke-width="3.400" stroke-linejoin="round"><path d="M832 1373V1371.500Q832 1368.500 835.500 1368.500H856"/><path d="M862 1376.500V1378Q862 1381 858.500 1381H838"/></g><polygon points="864,1368.500 854.500,1362.600 854.500,1374.400"/><polygon points="830,1381 839.500,1375.100 839.500,1386.900"/><rect x="895" y="1365" width="21" height="20.700"/><polygon points="953.500,1365 971.700,1375 953.500,1385"/><circle cx="1021.300" cy="1374.500" r="11.500"/></svg>
</div></div>
<svg style="left:41px;top:3.5px" width="28" height="33" viewBox="0 0 28 33" ><path fill="#e8e8e8" d="M14 9C12 9 10.500 7.800 8 7.800C4 7.800 .500 11.500 .500 17.500C.500 24 5 32 8.500 32C10.500 32 11.500 30.700 14 30.700C16.500 30.700 17.300 32 19.500 32C22.500 32 25.500 27.500 27 23.500C23.500 22 22 19.500 22 16.500C22 13.500 23.500 11.500 26 10C24.500 8.300 22.300 7.800 20.500 7.800C17.500 7.800 16 9 14 9ZM14 7.500C14 4 16.500 .800 20 .500C20.300 4 17.500 7.300 14 7.500Z"/></svg>
<svg style="left:1976px;top:4px" width="36" height="36" viewBox="0 0 36 36" ><polygon points="3,3 32,14 10,33" fill="#3c3c3c" stroke="#a0a0a0" stroke-width="1"/><polygon points="7,26 27,12 33,17 11,34" fill="#e0e0e0"/><polygon points="11,34 33,17 33,20 12,36" fill="#a8a8a8"/><circle cx="21" cy="25" r="4.500" fill="#1a1a1a" stroke="#4a6a9a" stroke-width="1.5"/><circle cx="10" cy="24" r="1.800" fill="#48c048"/></svg>
<svg style="left:2040px;top:6px" width="40" height="36" viewBox="0 0 40 36" ><circle cx="17" cy="14.500" r="9.600" fill="none" stroke="#e0e0e0" stroke-width="2.400"/><path d="M24 21.800L33 31.200" stroke="#e0e0e0" stroke-width="3" stroke-linecap="round"/></svg>
<svg style="left:2104px;top:10px" width="42" height="26" viewBox="0 0 42 26" ><g fill="#e8e8e8"><rect x="2" y="2" width="4" height="4.500"/><rect x="10" y="2" width="28" height="4.500"/><rect x="2" y="10" width="4" height="4.500"/><rect x="10" y="10" width="22" height="4.500"/><rect x="2" y="18" width="4" height="4.500"/><rect x="10" y="18" width="28" height="4.500"/></g></svg>
<div class="b " style="left:108px;top:1399.5px;width:1972px;height:4px;background:#111114;"></div>
<div class="b " style="left:106px;top:1402px;width:1976px;height:160px;background:#0f0f10;border:2px solid #b4b4b4;border-radius:7px 7px 0 0;"></div>
<svg style="left:0;top:1400px" width="2188" height="152" viewBox="0 1400 2188 152">
<defs>
<linearGradient id="gFinL" x1="0" y1="0" x2="0" y2="1"><stop offset="0" stop-color="#19c0f8"/><stop offset="1" stop-color="#1a6fe6"/></linearGradient>
<linearGradient id="gFinR" x1="0" y1="0" x2="0" y2="1"><stop offset="0" stop-color="#f4f6fa"/><stop offset="1" stop-color="#d9e0ea"/></linearGradient>
<radialGradient id="gSiri" cx="0.5" cy="0.5" r="0.5"><stop offset="0" stop-color="#3a4fb0"/><stop offset="0.6" stop-color="#2a2a78"/><stop offset="1" stop-color="#1a1440"/></radialGradient>
<linearGradient id="gLaunch" x1="0" y1="0" x2="0" y2="1"><stop offset="0" stop-color="#c9cdd0"/><stop offset="1" stop-color="#7f8386"/></linearGradient>
<radialGradient id="gSaf" cx="0.5" cy="0.35" r="0.7"><stop offset="0" stop-color="#22c4f4"/><stop offset="1" stop-color="#1a62e4"/></radialGradient>
<linearGradient id="gSky" x1="0" y1="0" x2="0" y2="1"><stop offset="0" stop-color="#2a7be0"/><stop offset="1" stop-color="#9cc8f0"/></linearGradient>
<linearGradient id="gNoteTop" x1="0" y1="0" x2="0" y2="1"><stop offset="0" stop-color="#ffd94a"/><stop offset="1" stop-color="#f4b81e"/></linearGradient>
<linearGradient id="gItRing" x1="0" y1="0" x2="0.6" y2="1"><stop offset="0" stop-color="#f2566a"/><stop offset="0.5" stop-color="#c05ad0"/><stop offset="1" stop-color="#38b6f0"/></linearGradient>
<linearGradient id="gItNote" x1="0" y1="0" x2="0" y2="1"><stop offset="0" stop-color="#f4506a"/><stop offset="0.55" stop-color="#b45adc"/><stop offset="1" stop-color="#36a8f4"/></linearGradient>
<linearGradient id="gApp" x1="0" y1="0" x2="0" y2="1"><stop offset="0" stop-color="#1fb2f8"/><stop offset="1" stop-color="#1c66ea"/></linearGradient>
<linearGradient id="gPref" x1="0" y1="0" x2="0" y2="1"><stop offset="0" stop-color="#c4ccd4"/><stop offset="1" stop-color="#6e747a"/></linearGradient>
<linearGradient id="gMt" x1="0" y1="0" x2="0" y2="1"><stop offset="0" stop-color="#32b2f0"/><stop offset="1" stop-color="#4a8cd8"/></linearGradient>
<linearGradient id="gFold" x1="0" y1="0" x2="0" y2="1"><stop offset="0" stop-color="#58aee0"/><stop offset="1" stop-color="#74bce6"/></linearGradient>
<linearGradient id="gTrash" x1="0" y1="0" x2="1" y2="0"><stop offset="0" stop-color="#2a2c2e"/><stop offset="0.5" stop-color="#4a4d50"/><stop offset="1" stop-color="#2e3032"/></linearGradient>
<linearGradient id="gSL" x1="0" y1="1" x2="1" y2="0"><stop offset="0" stop-color="#dcdcdc"/><stop offset="0.22" stop-color="#dedede"/><stop offset="0.24" stop-color="#ffffff"/><stop offset="0.82" stop-color="#ffffff"/><stop offset="0.84" stop-color="#e6e6e6"/><stop offset="1" stop-color="#e0e0e0"/></linearGradient>
<clipPath id="cFin"><rect x="129" y="1428" width="96" height="90" rx="5"/></clipPath>
<filter id="fB" x="-50%" y="-50%" width="200%" height="200%"><feGaussianBlur stdDeviation="2.600"/></filter><filter id="fB2" x="-50%" y="-50%" width="200%" height="200%"><feGaussianBlur stdDeviation="1.200"/></filter><clipPath id="cSiri"><circle cx="305" cy="1472.5" r="47"/></clipPath>
</defs>

<!-- Finder -->
<g clip-path="url(#cFin)">
<rect x="129" y="1428" width="96" height="90" fill="url(#gFinR)"/>
<path d="M129 1428H181C172 1448 168 1466 167 1481H183C184 1494 186 1507 189 1518H129Z" fill="url(#gFinL)"/>
</g>
<path d="M181 1428C172 1448 168 1466 167 1481H183C184 1494 186 1507 189 1518" fill="none" stroke="#1c2a44" stroke-width="1.6"/>
<path d="M148 1484C162 1499 193 1499 206 1485" fill="none" stroke="#1c2230" stroke-width="2.6" stroke-linecap="round"/>
<rect x="153.500" y="1449" width="3.6" height="10" rx="1.8" fill="#1c2230"/>
<rect x="196.500" y="1449" width="3.6" height="10" rx="1.8" fill="#1c2230"/>
<circle cx="176" cy="1543.500" r="4" fill="#9a9a9a"/>

<!-- Siri -->
<circle cx="305" cy="1472.500" r="51.500" fill="#e2e0ea"/>
<circle cx="305" cy="1472.500" r="47" fill="url(#gSiri)"/>
<g clip-path="url(#cSiri)"><g filter="url(#fB)">
<ellipse cx="312" cy="1445" rx="30" ry="16" fill="#d83aa0" opacity="0.85" transform="rotate(-25 312 1445)"/>
<ellipse cx="335" cy="1452" rx="16" ry="10" fill="#c8405a" opacity="0.7"/>
<ellipse cx="330" cy="1488" rx="24" ry="8" fill="#32d8a8" opacity="0.85" transform="rotate(18 330 1488)"/>
<ellipse cx="282" cy="1492" rx="24" ry="7" fill="#38c8f0" opacity="0.85" transform="rotate(-30 282 1492)"/>
<ellipse cx="312" cy="1500" rx="6" ry="24" fill="#e050c0" opacity="0.8" transform="rotate(-18 312 1500)"/>
</g><g filter="url(#fB2)"><ellipse cx="300" cy="1474" rx="26" ry="5" fill="#e8f4ff" opacity="0.9" transform="rotate(-28 300 1474)"/>
<ellipse cx="304" cy="1474" rx="22" ry="4" fill="#ffffff" opacity="0.9" transform="rotate(20 304 1474)"/>
<circle cx="301" cy="1474" r="6" fill="#fff" opacity="0.9"/>
</g></g>

<!-- Launchpad -->
<circle cx="430.500" cy="1473" r="51.500" fill="#e4e6e8"/>
<circle cx="430.500" cy="1473" r="48.500" fill="url(#gLaunch)"/>
<g fill="#4e5256">
<path d="M461 1437C445 1438 428 1449 417 1466L409 1487L418 1496L438 1487C454 1475 462 1455 461 1437Z"/>
<path d="M420 1461L396 1468L391 1476L413 1478Z"/>
<path d="M437 1487L433 1510L425 1514L421 1494Z"/>
<path d="M408 1489C400 1492 398 1500 398 1507C405 1506 413 1504 416 1497Z"/>
</g>
<circle cx="441" cy="1462" r="5.500" fill="#c4c8cc"/>

<!-- Safari -->
<circle cx="559" cy="1473" r="52" fill="#e8eaee"/>
<circle cx="559" cy="1473" r="48" fill="url(#gSaf)"/>
<circle cx="559" cy="1473" r="41" fill="none" stroke="#fff" stroke-width="8" stroke-dasharray="1.6 3.766" opacity="0.95"/>
<polygon points="591,1441 553,1467 565,1479" fill="#f23c38"/>
<polygon points="591,1441 565,1479 559,1473" fill="#c82c2a"/>
<polygon points="527,1505 553,1467 565,1479" fill="#f4f4f4"/>
<polygon points="527,1505 559,1473 565,1479" fill="#c8c8c8"/>

<!-- Mail stamp -->
<g transform="rotate(-9.300 685.3 1471.9)">
<rect x="645.0" y="1422.9" width="80.5" height="98" fill="#fcfcfc"/>
<g fill="#0f0f10"><circle cx="645.0" cy="1422.9" r="2.200"/><circle cx="645.0" cy="1520.9" r="2.200"/><circle cx="652.4" cy="1422.9" r="2.200"/><circle cx="652.4" cy="1520.9" r="2.200"/><circle cx="659.7" cy="1422.9" r="2.200"/><circle cx="659.7" cy="1520.9" r="2.200"/><circle cx="667.0" cy="1422.9" r="2.200"/><circle cx="667.0" cy="1520.9" r="2.200"/><circle cx="674.3" cy="1422.9" r="2.200"/><circle cx="674.3" cy="1520.9" r="2.200"/><circle cx="681.6" cy="1422.9" r="2.200"/><circle cx="681.6" cy="1520.9" r="2.200"/><circle cx="689.0" cy="1422.9" r="2.200"/><circle cx="689.0" cy="1520.9" r="2.200"/><circle cx="696.3" cy="1422.9" r="2.200"/><circle cx="696.3" cy="1520.9" r="2.200"/><circle cx="703.6" cy="1422.9" r="2.200"/><circle cx="703.6" cy="1520.9" r="2.200"/><circle cx="710.9" cy="1422.9" r="2.200"/><circle cx="710.9" cy="1520.9" r="2.200"/><circle cx="718.2" cy="1422.9" r="2.200"/><circle cx="718.2" cy="1520.9" r="2.200"/><circle cx="725.5" cy="1422.9" r="2.200"/><circle cx="725.5" cy="1520.9" r="2.200"/><circle cx="645.0" cy="1430.4" r="2.200"/><circle cx="725.5" cy="1430.4" r="2.200"/><circle cx="645.0" cy="1438.0" r="2.200"/><circle cx="725.5" cy="1438.0" r="2.200"/><circle cx="645.0" cy="1445.5" r="2.200"/><circle cx="725.5" cy="1445.5" r="2.200"/><circle cx="645.0" cy="1453.1" r="2.200"/><circle cx="725.5" cy="1453.1" r="2.200"/><circle cx="645.0" cy="1460.6" r="2.200"/><circle cx="725.5" cy="1460.6" r="2.200"/><circle cx="645.0" cy="1468.1" r="2.200"/><circle cx="725.5" cy="1468.1" r="2.200"/><circle cx="645.0" cy="1475.7" r="2.200"/><circle cx="725.5" cy="1475.7" r="2.200"/><circle cx="645.0" cy="1483.2" r="2.200"/><circle cx="725.5" cy="1483.2" r="2.200"/><circle cx="645.0" cy="1490.7" r="2.200"/><circle cx="725.5" cy="1490.7" r="2.200"/><circle cx="645.0" cy="1498.3" r="2.200"/><circle cx="725.5" cy="1498.3" r="2.200"/><circle cx="645.0" cy="1505.8" r="2.200"/><circle cx="725.5" cy="1505.8" r="2.200"/><circle cx="645.0" cy="1513.4" r="2.200"/><circle cx="725.5" cy="1513.4" r="2.200"/></g>
<rect x="652.5" y="1430.4" width="65.5" height="83" fill="url(#gSky)"/>
<clipPath id="cStamp"><rect x="645" y="1422.900" width="80.500" height="98"/></clipPath>
<g clip-path="url(#cStamp)">
<circle cx="709" cy="1504" r="20" fill="none" stroke="#6e94c4" stroke-width="2.200" opacity="0.7"/>
<circle cx="712" cy="1507" r="11.500" fill="#7aa6dc" opacity="0.45" stroke="#6e94c4" stroke-width="1.600"/>
<path d="M712 1502.500C710.500 1502.500 709.500 1501.800 708 1501.800C705.500 1501.800 703.500 1504 703.500 1507C703.500 1510.500 706 1514 708 1514C709.200 1514 709.800 1513.300 711.500 1513.300C713 1513.300 713.500 1514 714.800 1514C716.500 1514 718.300 1511.500 719 1509.500C717 1508.500 716.300 1507.300 716.300 1505.500C716.300 1504 717 1503 718.300 1502.200C717.400 1501.500 716.300 1501.800 715 1501.800C713.700 1501.800 713 1502.500 712 1502.500Z" fill="#5a86c8" opacity="0.85"/>
</g>
</g>

<g>
<path d="M656 1443L660.500 1437.500L668 1441.500L674 1452L679 1464L682 1471L675 1479L668 1471L661 1460L656.500 1450Z" fill="#8a8078"/>
<path d="M657.500 1443L660.500 1439L666.500 1442.500L672 1452L676 1462L671 1466L664 1457L658.500 1449Z" fill="#dcd8d0"/>
<path d="M680 1473L690 1476L700 1482L708 1489.500L712.500 1497L704 1496.500L694 1492.500L684 1487L677 1482Z" fill="#7c6a50"/>
<path d="M684 1478L692 1480.500L700 1485L706 1491L698 1490L690 1486L683 1482Z" fill="#c8b89c"/>
<path d="M671 1481L681 1487L676 1496.500L666 1496L660 1489.500Z" fill="#b47c34"/>
<ellipse cx="678" cy="1476.500" rx="4.600" ry="9" transform="rotate(38 678 1476.500)" fill="#e0cca4"/>
<circle cx="684.500" cy="1469.500" r="2.600" fill="#5a4630"/>
</g>
<!-- Notes -->
<g transform="rotate(-9 812.1 1471.7)">
<rect x="772.4" y="1423.7" width="79.4" height="96" rx="2" fill="#fdfdfb"/>
<rect x="772.4" y="1516.7" width="79.4" height="3" fill="#d8c080"/>
<rect x="772.4" y="1423.7" width="79.4" height="16" rx="2" fill="url(#gNoteTop)"/>
<path d="M774.4 1449.7H849.8M774.4 1457.1H849.8M774.4 1464.5H849.8M774.4 1471.9H849.8M774.4 1479.3H849.8M774.4 1486.7H849.8M774.4 1494.1H849.8M774.4 1501.5H849.8M774.4 1508.9H849.8M774.4 1516.3H849.8" stroke="#dcdcd8" stroke-width="1.300" fill="none"/>
<path d="M772.4 1441.2H851.8" stroke="#c8a850" stroke-width="1" stroke-dasharray="1.200 1.600"/>
</g>

<!-- Photos -->
<circle cx="939" cy="1473" r="52" fill="#f2f2f4"/>
<g style="isolation:isolate" opacity="0.92"><ellipse cx="939" cy="1450.500" rx="13.500" ry="19.500" fill="#f8a030" transform="rotate(0 939 1473)" style="mix-blend-mode:multiply"/><ellipse cx="939" cy="1450.500" rx="13.500" ry="19.500" fill="#f4e038" transform="rotate(45 939 1473)" style="mix-blend-mode:multiply"/><ellipse cx="939" cy="1450.500" rx="13.500" ry="19.500" fill="#9ccc3c" transform="rotate(90 939 1473)" style="mix-blend-mode:multiply"/><ellipse cx="939" cy="1450.500" rx="13.500" ry="19.500" fill="#3eb470" transform="rotate(135 939 1473)" style="mix-blend-mode:multiply"/><ellipse cx="939" cy="1450.500" rx="13.500" ry="19.500" fill="#58a4e4" transform="rotate(180 939 1473)" style="mix-blend-mode:multiply"/><ellipse cx="939" cy="1450.500" rx="13.500" ry="19.500" fill="#8e78d4" transform="rotate(225 939 1473)" style="mix-blend-mode:multiply"/><ellipse cx="939" cy="1450.500" rx="13.500" ry="19.500" fill="#dc6cb4" transform="rotate(270 939 1473)" style="mix-blend-mode:multiply"/><ellipse cx="939" cy="1450.500" rx="13.500" ry="19.500" fill="#f0504c" transform="rotate(315 939 1473)" style="mix-blend-mode:multiply"/></g>
<circle cx="939" cy="1473" r="2.500" fill="#fff"/>

<!-- iTunes -->
<circle cx="1065" cy="1473" r="52.500" fill="url(#gItRing)"/>
<circle cx="1065" cy="1473" r="47" fill="#f6f4f8"/>
<path d="M1055 1448L1088 1440V1490A11 9.500 0 1 1 1081 1481.500V1457L1062 1462V1497A11 9.500 0 1 1 1055 1488.500Z" fill="url(#gItNote)"/>

<!-- App Store -->
<circle cx="1191" cy="1473" r="52" fill="#e6eaf0"/>
<circle cx="1191" cy="1473" r="48" fill="url(#gApp)"/>
<g stroke="#f4f6fa" stroke-width="8" stroke-linecap="round" fill="none">
<path d="M1197 1442L1170 1489"/><path d="M1185 1442L1217 1495"/><path d="M1162 1482H1201"/><path d="M1212 1482H1220"/><path d="M1168 1492L1165 1497"/>
</g>

<!-- Terminal -->
<rect x="1268" y="1428" width="102" height="90" rx="5" fill="#0a0a0a" stroke="#c8c8c8" stroke-width="1.600"/>
<rect x="1273" y="1434" width="92" height="78" rx="2" fill="#242424"/>
<text x="1280" y="1456" font-family="Liberation Mono, monospace" font-weight="bold" font-size="24" fill="#f0f0f0">&gt;_</text>

<!-- System Preferences -->
<rect x="1393.500" y="1425" width="103" height="96" rx="4" fill="url(#gPref)"/>
<circle cx="1445" cy="1473" r="39" fill="none" stroke="#4a4a4a" stroke-width="7" stroke-dasharray="5.2 4.2"/>
<circle cx="1445" cy="1473" r="36" fill="#2c2c2c"/>
<circle cx="1445" cy="1473" r="33" fill="none" stroke="#8a8a8a" stroke-width="6" stroke-dasharray="4.4 4.24"/>
<circle cx="1445" cy="1473" r="27" fill="#4e4e4e" stroke="#9a9a9a" stroke-width="5"/>
<g stroke="#a8a8a8" stroke-width="5.500" stroke-linecap="round"><path d="M1445 1473L1431 1450M1445 1473L1472 1473M1445 1473L1431 1496"/></g>
<circle cx="1445" cy="1473" r="4.500" fill="#bcbcbc"/>

<!-- Mountain app -->
<circle cx="1572.500" cy="1472.500" r="54.500" fill="#ffffff"/>
<circle cx="1572.500" cy="1472.500" r="50" fill="url(#gMt)"/>
<path d="M1524 1492H1621" stroke="#fff" stroke-width="4"/>
<path d="M1534 1490L1552 1452L1560 1466" fill="none" stroke="#fff" stroke-width="4" stroke-linejoin="miter"/>
<path d="M1554 1490L1582 1436L1608 1490" fill="none" stroke="#fff" stroke-width="4" stroke-linejoin="miter"/>

<!-- SpectraLayers -->
<rect x="1640" y="1414" width="118" height="118" rx="16" fill="url(#gSL)"/>
<g fill="#cc1c1c">
<path d="M1646 1451L1699 1428L1752 1451L1699 1474Z"/>
<path d="M1646 1474L1662 1467L1699 1483L1736 1467L1752 1474L1699 1498Z"/>
<path d="M1646 1497L1662 1490L1699 1506L1736 1490L1752 1497L1699 1521Z"/>
</g>
<path d="M1699 1474L1752 1451L1736 1447L1699 1462Z" fill="#a81414" opacity="0.5"/>
<circle cx="1697.500" cy="1543.500" r="4" fill="#9a9a9a"/>

<!-- separator -->
<rect x="1792" y="1423" width="2" height="109" fill="#484848"/>

<!-- Downloads folder -->
<path d="M1828 1436Q1828 1430 1834 1430H1859Q1864 1430 1866 1435L1868 1439H1933Q1939 1439 1939 1445V1510Q1939 1516 1933 1516H1834Q1828 1516 1828 1510Z" fill="#4a94c8"/>
<rect x="1828" y="1444" width="111" height="72" rx="4" fill="url(#gFold)"/>
<path d="M1828 1505H1939M1828 1510H1939" stroke="#5aa4d4" stroke-width="1.500"/>
<circle cx="1883" cy="1477" r="25" fill="#4e9ccc"/>
<path d="M1877 1462H1889V1476H1897L1883 1492L1869 1476H1877Z" fill="#78bce4"/>

<!-- Trash -->
<path d="M1966 1432L1978 1516Q1979 1524 1990 1525H2028Q2039 1524 2040 1516L2052 1432Z" fill="url(#gTrash)"/>
<ellipse cx="2009" cy="1432" rx="43" ry="10" fill="#3a3d40" stroke="#5a5e62" stroke-width="2"/>
</svg>
</body></html>
